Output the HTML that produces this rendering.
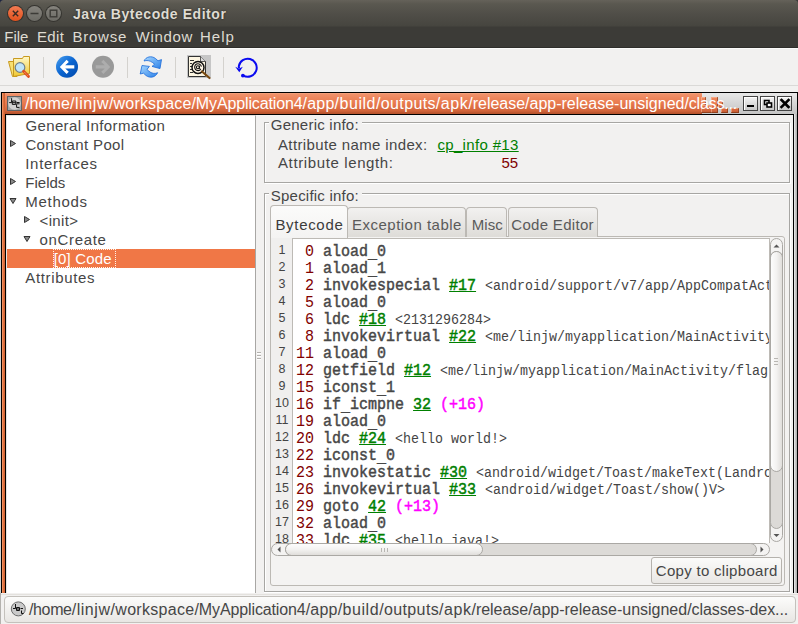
<!DOCTYPE html>
<html><head><meta charset="utf-8">
<style>
*{margin:0;padding:0;box-sizing:border-box}
html,body{width:798px;height:624px;overflow:hidden;background:#f2f1f0;font-family:"Liberation Sans",sans-serif;color:#3c3c3c}
.a{position:absolute}
.t{position:absolute;white-space:pre;line-height:1}
/* title + menu */
#tb{left:0;top:0;width:798px;height:49px;background:linear-gradient(#65625a 0,#5a5850 4px,#504e48 14px,#46453f 26px,#3c3b37 27px,#3c3b37 47px,#2f2e2b 47px,#2f2e2b 48px,#fbfbfa 48px,#fbfbfa 49px);border-radius:4px 4px 0 0}
#title{left:73px;top:7px;text-shadow:0 0 2px #1e1d1a;font-weight:bold;font-size:14px;color:#dfdbd2;letter-spacing:0.55px}
.menu{top:29px;font-size:15px;color:#dfdbd2}
.wb{position:absolute;top:5px;width:17px;height:17px;border-radius:50%;background:#34332f}
.wb i{position:absolute;left:1px;top:1px;width:15px;height:15px;border-radius:50%;display:block}
.wb svg{position:absolute;left:0;top:0}
/* toolbar */
.sep{position:absolute;top:57px;width:1px;height:21px;background:#d4d2ce}
#frame{left:1px;top:92px;width:797px;height:540px;background:#000}
#ftitle{left:2px;top:93px;width:795px;height:21px;background:linear-gradient(#e8e8e8,#c4c4c4)}
#forange{left:2px;top:93px;width:700px;height:21px;background:linear-gradient(#f7ae8a 0,#f0916a 1px,#e97a4e 10px,#d2643a 18px,#b9552e 20px)}
.ob{background:linear-gradient(#f7ae8a 0,#f0916a 1px,#e97a4e 10px,#d2643a 18px,#b9552e 20px);background-size:1px 21px;background-repeat:repeat-x;box-shadow:inset -1px -1px 0 rgba(110,45,15,0.55),inset 1px 1px 0 rgba(255,200,170,0.5)}
#fltxt{left:25px;top:96px;font-size:16px;color:#fff}
#lb{left:2px;top:93px;width:3px;height:500px;background:linear-gradient(90deg,#f5a070,#e07040,#c86030)}
#rb{left:794px;top:114px;width:3px;height:479px;background:linear-gradient(90deg,#f0f0f0,#c8c8c8,#a8a8a8)}
#tree{left:6px;top:115px;width:250px;height:478px;background:#fff;border-right:1px solid #a8a7a4;border-left:1px solid #e6e4e1;border-top:1px solid #e6e4e1}
#right{left:256px;top:115px;width:537px;height:478px;background:#f2f1f0}
.tr{position:absolute;font-size:15px;color:#464646;letter-spacing:0.9px;white-space:pre;line-height:19px;height:19px;padding-top:0}
.arr{position:absolute;width:0;height:0}
.etch{position:absolute;border:1px solid #a6a5a2;box-shadow:1px 1px 0 #fff, inset 1px 1px 0 #fff}

.gl{position:absolute;background:#a7a6a3}
.wl{position:absolute;background:#fff}
.lbl{position:absolute;white-space:pre;line-height:1;font-size:15px;color:#464646}
.tab{position:absolute;top:207px;height:30px;border:1px solid #bcb9b4;border-bottom:none;border-radius:4px 4px 0 0;background:linear-gradient(#f2f1f0,#dedcd8)}
.tabt{position:absolute;white-space:pre;line-height:1;font-size:15px;color:#5a5a5a}
.code{position:absolute;left:296px;white-space:pre;font-family:"Liberation Mono",monospace;font-size:16px;line-height:17px;height:17px;color:#474747;transform:scaleX(0.9375);transform-origin:0 0}
.code i.u{font-style:normal;position:relative;top:2px}
.code b{font-weight:normal;-webkit-text-stroke:0.45px #474747}
.o{color:#800000}
.r{color:#008000;-webkit-text-stroke:0.45px #008000;text-decoration:underline}
.m{color:#ff00ff;-webkit-text-stroke:0.45px #ff00ff}
.c{font-size:14.22px;color:#444}
.ln{position:absolute;left:271px;width:22px;text-align:center;font-size:12.5px;line-height:17px;color:#444}
#status{left:0;top:593px;width:798px;height:31px;background:#f2f1f0}
</style></head><body>
<div class="a" style="left:0;top:0;width:4px;height:4px;background:#1c2340"></div><div class="a" style="left:794px;top:0;width:4px;height:4px;background:#3a3a3a"></div><div id="tb" class="a"></div>
<div class="wb" style="left:7px"><i style="background:linear-gradient(#f37b52,#e2521e)"></i><svg width="17" height="17"><path d="M5.8 5.8L11.2 11.2M11.2 5.8L5.8 11.2" stroke="#3a2a22" stroke-width="1.4"/></svg></div>
<div class="wb" style="left:26px"><i style="background:linear-gradient(#85837d,#6c6b65)"></i><svg width="17" height="17"><path d="M4.5 8.5H12.5" stroke="#3c3b37" stroke-width="1.5"/></svg></div>
<div class="wb" style="left:45px"><i style="background:linear-gradient(#85837d,#6c6b65)"></i><svg width="17" height="17"><rect x="5.2" y="5.2" width="6.6" height="6.6" fill="none" stroke="#3c3b37" stroke-width="1.4"/></svg></div>
<div class="t" id="title">Java Bytecode Editor</div>
<div class="t menu" style="left:4.3px;letter-spacing:0px">File</div>
<div class="t menu" style="left:37px;letter-spacing:0.33px">Edit</div>
<div class="t menu" style="left:72.5px;letter-spacing:0.75px">Browse</div>
<div class="t menu" style="left:135.6px;letter-spacing:0.68px">Window</div>
<div class="t menu" style="left:200px;letter-spacing:1.0px">Help</div>

<svg class="a" style="left:0;top:48px" width="270" height="37" viewBox="0 48 270 37">
<defs>
<linearGradient id="gBlue" x1="0" y1="0" x2="1" y2="1"><stop offset="0" stop-color="#4aa0f0"/><stop offset="0.5" stop-color="#0a64d0"/><stop offset="1" stop-color="#0348a8"/></linearGradient>
<linearGradient id="gFold" x1="0" y1="0" x2="0" y2="1"><stop offset="0" stop-color="#fff8c8"/><stop offset="1" stop-color="#f0c830"/></linearGradient>
<linearGradient id="gRef" x1="0" y1="0" x2="1" y2="1"><stop offset="0" stop-color="#a8d8ff"/><stop offset="1" stop-color="#2a80e8"/></linearGradient>
</defs>
<!-- folder -->
<path d="M8.5 61.5 L13.5 61.5 L17 76.5 L12.5 76.5 Z" fill="#f8e070" stroke="#c89a20" stroke-width="1"/>
<path d="M13.5 58.5 L22.5 58.5 L23.5 56.5 L29.5 56.5 L29.5 73.5 L13.5 76.5 Z" fill="url(#gFold)" stroke="#c89a20" stroke-width="1"/>
<circle cx="20" cy="67.5" r="4.8" fill="#c0e4fa" stroke="#70808c" stroke-width="1.2"/>
<path d="M23.6 71.3 L28.4 76.3" stroke="#e05020" stroke-width="3" stroke-linecap="round"/>
<path d="M24.4 72.1 L27.6 75.5" stroke="#f8c080" stroke-width="1" stroke-dasharray="1 1"/>
<!-- back -->
<circle cx="67" cy="66.8" r="11" fill="url(#gBlue)"/>
<path d="M59.8 66.9 L66.6 59.8 L68.8 62 L65.2 65.2 L74.3 65.2 L74.3 68.6 L65.2 68.6 L68.8 71.8 L66.6 74 Z" fill="#fff"/>
<!-- forward -->
<circle cx="103" cy="66.8" r="11" fill="#999"/>
<path d="M110.2 66.9 L103.4 59.8 L101.2 62 L104.8 65.2 L95.7 65.2 L95.7 68.6 L104.8 68.6 L101.2 71.8 L103.4 74 Z" fill="#adadad"/>
<!-- refresh -->
<path d="M144 61 C146 56.5 151.5 55.5 155.5 58.5 L158 60.8 L161.5 59.6 L160 68.6 L152 66.4 L154.6 64.2 L152.5 62.5 C150 60.5 146.5 60 144 61 Z" fill="url(#gRef)" stroke="#1a6ad8" stroke-width="0.8"/>
<path d="M157.6 72.7 C155.5 77.5 150 78.5 146 75.5 L143.5 73.2 L140.2 74 L142 65.5 L149.4 66.4 L147 69.4 L149 71.3 C151.5 73.5 155 74 157.6 72.7 Z" fill="url(#gRef)" stroke="#1a6ad8" stroke-width="0.8"/>
<!-- doc -->
<rect x="187" y="55" width="24" height="23" fill="#c6c6c6"/>
<path d="M188.5 56.5 L200.5 56.5 L205.5 61.5 L205.5 76.5 L188.5 76.5 Z" fill="#fdf6e2" stroke="#333" stroke-width="1"/>
<path d="M200.5 56.5 L200.5 61.5 L205.5 61.5" fill="#ddd" stroke="#333" stroke-width="0.8"/>
<path d="M190 60.5 H194 M190 63.5 H192 M190 66.5 H192 M190 69.5 H192 M190 72.5 H193" stroke="#333" stroke-width="1"/>
<circle cx="198" cy="67.4" r="6" fill="#fff6e6" stroke="#111" stroke-width="1.5"/>
<path d="M200.8 69.2 A3.4 3.4 0 1 1 201.4 66.6" fill="none" stroke="#111" stroke-width="1.1"/>
<circle cx="197.9" cy="67.3" r="1.5" fill="none" stroke="#111" stroke-width="1.1"/>
<path d="M199.4 65.6 V68.4 Q199.6 69.4 200.8 69.2" fill="none" stroke="#111" stroke-width="1"/>
<path d="M202 71.5 L209.5 78" stroke="#7a4a10" stroke-width="2.2" stroke-linecap="round"/>
<!-- undo -->
<path d="M239 68 L238.8 66.4 A9 9 0 1 1 243.3 75.6" fill="none" stroke="#0a0af0" stroke-width="2"/>
<path d="M235.2 66.8 L239 68.6 L242.8 66.8 L239.3 72.2 Z" fill="#0a0af0"/>
<circle cx="242.9" cy="75.6" r="1.9" fill="#0a0af0"/>
</svg>
<div class="sep" style="left:43px"></div>
<div class="sep" style="left:127px"></div>
<div class="sep" style="left:175px"></div>
<div class="sep" style="left:223px"></div>
<div class="a" style="left:0;top:85px;width:798px;height:1px;background:#dad9d7"></div>

<div id="frame" class="a"></div>
<div id="ftitle" class="a"></div>
<div id="forange" class="a"></div>
<div class="a ob" style="left:701px;top:97px;width:5px;height:16px;background-position:0 -4px"></div>
<div class="a ob" style="left:701px;top:105px;width:17px;height:8px;background-position:0 -12px"></div>
<div class="a ob" style="left:711px;top:97px;width:7px;height:16px;background-position:0 -4px"></div>
<div class="a ob" style="left:718px;top:101px;width:5px;height:7px;background-position:0 -8px"></div>
<div class="a ob" style="left:721px;top:108px;width:7px;height:5px;background-position:0 -15px"></div>
<div class="a ob" style="left:731px;top:108px;width:8px;height:5px;background-position:0 -15px"></div>
<div class="t" id="fltxt"><span style="letter-spacing:0.11px">/home</span><span style="letter-spacing:0.57px">/linjw</span><span style="letter-spacing:0.16px">/workspace</span><span style="letter-spacing:-0.13px">/MyApplication4</span><span style="letter-spacing:0.21px">/app</span><span style="letter-spacing:0.54px">/build</span><span style="letter-spacing:0.36px">/outputs</span><span style="letter-spacing:0.56px">/apk</span><span style="letter-spacing:-0.03px">/release</span><span style="letter-spacing:0.01px">/app-release-unsigned</span><span style="letter-spacing:-0.19px">/class...</span></div>
<div id="lb" class="a"></div><div class="a" style="left:0;top:92px;width:1px;height:501px;background:#d6d4d0"></div>
<div id="rb" class="a"></div>
<div id="tree" class="a"></div>
<div id="right" class="a"></div>

<div class="tr" style="left:25.4px;top:116px;letter-spacing:0.38px">General Information</div>
<div class="tr" style="left:25.4px;top:135px;letter-spacing:0.38px">Constant Pool</div>
<div class="tr" style="left:25.3px;top:154px;letter-spacing:0.66px">Interfaces</div>
<div class="tr" style="left:25.3px;top:173px;letter-spacing:0.0px">Fields</div>
<div class="tr" style="left:25.3px;top:192px;letter-spacing:0.7px">Methods</div>
<div class="tr" style="left:39.6px;top:211px;letter-spacing:0.32px">&lt;init&gt;</div>
<div class="tr" style="left:39.6px;top:230px;letter-spacing:0.66px">onCreate</div>
<div class="a" style="left:7px;top:249px;width:248px;height:19px;background:#f07746"></div>
<div class="tr" style="left:53.8px;top:249px;color:#fff;letter-spacing:0.14px">[0] Code</div>
<div class="tr" style="left:25.3px;top:268px;letter-spacing:0.64px">Attributes</div>


<div class="a" style="left:257px;top:352px;width:4px;height:1px;background:#b4b2ae;box-shadow:0 1px 0 #fff,0 3px 0 #b4b2ae,0 4px 0 #fff,0 6px 0 #b4b2ae,0 7px 0 #fff"></div>
<!-- generic info -->
<div class="wl" style="left:265px;top:123px;width:526px;height:61px"></div>
<div class="a" style="left:266px;top:124px;width:523px;height:58px;background:#f2f1f0"></div>
<div class="gl" style="left:264px;top:122px;width:526px;height:61px"></div>
<div class="a" style="left:265px;top:123px;width:524px;height:59px;background:#f2f1f0;border-left:1px solid #fff;border-top:1px solid #fff"></div>
<div class="a" style="left:269px;top:116px;width:93px;height:14px;background:#f2f1f0"></div>
<div class="lbl" style="left:270.8px;top:117px;letter-spacing:0.23px">Generic info:</div>
<div class="lbl" style="left:278px;top:137px;letter-spacing:0.37px">Attribute name index:</div>
<div class="lbl" style="left:278px;top:155px;letter-spacing:0.62px">Attribute length:</div>
<div class="lbl" style="left:437.4px;top:137px;color:#008000;text-decoration:underline;letter-spacing:0.34px">cp_info #13</div>
<div class="lbl" style="left:501.5px;top:155px;color:#800000;letter-spacing:0px">55</div>
<!-- specific info -->
<div class="gl" style="left:264px;top:193px;width:526px;height:399px"></div>
<div class="a" style="left:265px;top:194px;width:524px;height:397px;background:#f2f1f0;border-left:1px solid #fff;border-top:1px solid #fff"></div>
<div class="wl" style="left:264px;top:592px;width:527px;height:1px"></div>
<div class="wl" style="left:790px;top:193px;width:1px;height:400px"></div>
<div class="a" style="left:269px;top:187px;width:93px;height:14px;background:#f2f1f0"></div>
<div class="lbl" style="left:270.8px;top:188px;letter-spacing:0.22px">Specific info:</div>
<!-- tab pane -->
<div class="a" style="left:270px;top:236px;width:515px;height:350px;border:1px solid #bcb9b4;border-radius:0 3px 3px 3px;background:#f4f3f2"></div>
<div class="tab" style="left:347px;width:119px"></div>
<div class="tab" style="left:466px;width:41px"></div>
<div class="tab" style="left:508px;width:90px"></div>
<div class="a" style="left:270px;top:205px;width:78px;height:33px;border:1px solid #bcb9b4;border-bottom:none;border-radius:4px 4px 0 0;background:linear-gradient(#fbfbfa,#f4f3f2)"></div>
<div class="tabt" style="left:275.4px;top:217px;color:#3c3c3c;letter-spacing:0.69px">Bytecode</div>
<div class="tabt" style="left:352px;top:217px;letter-spacing:0.49px">Exception table</div>
<div class="tabt" style="left:471.7px;top:217px;letter-spacing:0.1px">Misc</div>
<div class="tabt" style="left:511.3px;top:217px;letter-spacing:0.31px">Code Editor</div>
<!-- gutter + editor -->
<div class="a" style="left:271px;top:238px;width:21px;height:305px;background:#f0efee"></div>
<div class="a" style="left:292px;top:238px;width:478px;height:305px;background:#fff;border-left:1px solid #bdbab5;border-top:1px solid #bdbab5;border-right:1px solid #bdbab5;overflow:hidden" id="ed">
<div class="code" style="top:5px;left:3px"><span class="o"> 0</span> <b>aload<i class="u">_</i>0</b></div>
<div class="code" style="top:22px;left:3px"><span class="o"> 1</span> <b>aload<i class="u">_</i>1</b></div>
<div class="code" style="top:39px;left:3px"><span class="o"> 2</span> <b>invokespecial</b> <span class="r">#17</span> <span class="c">&lt;android/support/v7/app/AppCompatActivity/onCreate(Landroid/os/Bundle;)V&gt;</span></div>
<div class="code" style="top:56px;left:3px"><span class="o"> 5</span> <b>aload<i class="u">_</i>0</b></div>
<div class="code" style="top:73px;left:3px"><span class="o"> 6</span> <b>ldc</b> <span class="r">#18</span> <span class="c">&lt;2131296284&gt;</span></div>
<div class="code" style="top:90px;left:3px"><span class="o"> 8</span> <b>invokevirtual</b> <span class="r">#22</span> <span class="c">&lt;me/linjw/myapplication/MainActivity/setContentView(I)V&gt;</span></div>
<div class="code" style="top:107px;left:3px"><span class="o">11</span> <b>aload<i class="u">_</i>0</b></div>
<div class="code" style="top:124px;left:3px"><span class="o">12</span> <b>getfield</b> <span class="r">#12</span> <span class="c">&lt;me/linjw/myapplication/MainActivity/flag : I&gt;</span></div>
<div class="code" style="top:141px;left:3px"><span class="o">15</span> <b>iconst<i class="u">_</i>1</b></div>
<div class="code" style="top:158px;left:3px"><span class="o">16</span> <b>if<i class="u">_</i>icmpne</b> <span class="r">32</span> <span class="m">(+16)</span></div>
<div class="code" style="top:175px;left:3px"><span class="o">19</span> <b>aload<i class="u">_</i>0</b></div>
<div class="code" style="top:192px;left:3px"><span class="o">20</span> <b>ldc</b> <span class="r">#24</span> <span class="c">&lt;hello world!&gt;</span></div>
<div class="code" style="top:209px;left:3px"><span class="o">22</span> <b>iconst<i class="u">_</i>0</b></div>
<div class="code" style="top:226px;left:3px"><span class="o">23</span> <b>invokestatic</b> <span class="r">#30</span> <span class="c">&lt;android/widget/Toast/makeText(Landroid/content/Context;Ljava/lang/CharSequence;I)Landroid/widget/Toast;&gt;</span></div>
<div class="code" style="top:243px;left:3px"><span class="o">26</span> <b>invokevirtual</b> <span class="r">#33</span> <span class="c">&lt;android/widget/Toast/show()V&gt;</span></div>
<div class="code" style="top:260px;left:3px"><span class="o">29</span> <b>goto</b> <span class="r">42</span> <span class="m">(+13)</span></div>
<div class="code" style="top:277px;left:3px"><span class="o">32</span> <b>aload<i class="u">_</i>0</b></div>
<div class="code" style="top:294px;left:3px"><span class="o">33</span> <b>ldc</b> <span class="r">#35</span> <span class="c">&lt;hello java!&gt;</span></div>
</div>
<div class="ln" style="top:242px">1</div>
<div class="ln" style="top:259px">2</div>
<div class="ln" style="top:276px">3</div>
<div class="ln" style="top:293px">4</div>
<div class="ln" style="top:310px">5</div>
<div class="ln" style="top:327px">6</div>
<div class="ln" style="top:344px">7</div>
<div class="ln" style="top:361px">8</div>
<div class="ln" style="top:378px">9</div>
<div class="ln" style="top:395px">10</div>
<div class="ln" style="top:412px">11</div>
<div class="ln" style="top:429px">12</div>
<div class="ln" style="top:446px">13</div>
<div class="ln" style="top:463px">14</div>
<div class="ln" style="top:480px">15</div>
<div class="ln" style="top:497px">16</div>
<div class="ln" style="top:514px">17</div>
<div class="ln" style="top:531px">18</div>
<div class="a" style="left:271px;top:543px;width:21px;height:0px;background:#f0efee"></div>
<!-- vscroll -->
<div class="a" style="left:770px;top:238px;width:14px;height:305px;background:#f4f3f2"></div>
<div class="a" style="left:770px;top:238px;width:13px;height:304px;border:1px solid #aaa8a4;border-radius:7px;background:#f4f3f2"></div>
<div class="a" style="left:770px;top:251px;width:13px;height:278px;border:1px solid #aaa8a4;border-radius:7px;background:#dcdad7"></div>
<div class="a" style="left:770px;top:251px;width:13px;height:221px;border:1px solid #aaa8a4;border-radius:7px;background:linear-gradient(90deg,#fdfdfd,#f3f2f1 50%,#e0dedb)"></div>
<div class="a" style="left:774px;top:358px;width:4px;height:1px;background:#b8b6b2;box-shadow:0 3px 0 #b8b6b2,0 6px 0 #b8b6b2"></div>
<svg class="a" style="left:770px;top:238px" width="14" height="305"><path d="M3.5 9.5 L9.5 9.5 L6.5 6.5 Z" fill="#555"/><path d="M3.5 296 L9.5 296 L6.5 299 Z" fill="#555"/></svg>
<!-- hscroll -->
<div class="a" style="left:271px;top:543px;width:499px;height:13px;border:1px solid #aaa8a4;border-radius:7px;background:#f4f3f2"></div>
<div class="a" style="left:285px;top:543px;width:472px;height:13px;border:1px solid #aaa8a4;border-radius:7px;background:#dcdad7"></div>
<div class="a" style="left:285px;top:543px;width:198px;height:13px;border:1px solid #aaa8a4;border-radius:7px;background:linear-gradient(#fdfdfd,#f3f2f1 50%,#e0dedb)"></div>
<div class="a" style="left:381px;top:548px;width:1px;height:4px;background:#b8b6b2;box-shadow:3px 0 0 #b8b6b2,6px 0 0 #b8b6b2"></div>
<svg class="a" style="left:271px;top:543px" width="499" height="13"><path d="M9.5 3.5 L9.5 9.5 L6.5 6.5 Z" fill="#555"/><path d="M489.5 3.5 L489.5 9.5 L492.5 6.5 Z" fill="#555"/></svg>
<!-- copy button -->
<div class="a" style="left:651px;top:557px;width:131px;height:27px;border:1px solid #b5b2ad;border-radius:3px;background:linear-gradient(#fbfbfa,#e9e7e4)"></div>
<div class="lbl" style="left:655.8px;top:563px;letter-spacing:0.3px">Copy to clipboard</div>
<div id="status" class="a"></div>

<!-- tree arrows -->
<svg class="a" style="left:6px;top:115px" width="40" height="140">
<path d="M4.5 25.5 L4.5 31.5 L9.5 28.5 Z" fill="#8a8a8a" stroke="#333" stroke-width="1" stroke-linejoin="round"/>
<path d="M4.5 63.5 L4.5 69.5 L9.5 66.5 Z" fill="#8a8a8a" stroke="#333" stroke-width="1" stroke-linejoin="round"/>
<path d="M4 83.5 L10 83.5 L7 88.5 Z" fill="#8a8a8a" stroke="#333" stroke-width="1" stroke-linejoin="round"/>
<path d="M18.5 101.5 L18.5 107.5 L23.5 104.5 Z" fill="#8a8a8a" stroke="#333" stroke-width="1" stroke-linejoin="round"/>
<path d="M18 121.5 L24 121.5 L21 126.5 Z" fill="#8a8a8a" stroke="#333" stroke-width="1" stroke-linejoin="round"/>
</svg>
<div class="a" style="left:53px;top:249px;width:63px;height:19px;border:1px dotted #fff3e8"></div>
<!-- JBE icon -->
<svg class="a" style="left:7px;top:96px" width="15" height="15" viewBox="0 0 15 15">
<rect x="0" y="0" width="15" height="15" fill="#5e6264"/>
<rect x="1" y="1" width="13" height="13" fill="#a4a6a6"/>
<circle cx="7.5" cy="7.5" r="6.2" fill="#d2d2d2"/>
<path d="M4.6 2.2 V6.6 H2.2 M5.3 5 H8.8 V8.4 H5.3 Z M5.3 6.7 H8.8 M9.5 6.5 H12.6 M9.5 7.8 H12.6 M9.6 8.2 V11.4 H12.4" fill="none" stroke="#111" stroke-width="1"/>
</svg>
<!-- frame buttons -->
<div class="a" style="left:743px;top:96px;width:15px;height:15px;border:1px solid #444;background:linear-gradient(#f4f4f4,#c8c8c8);box-shadow:inset 1px 1px 0 #fff"></div>
<div class="a" style="left:760px;top:96px;width:15px;height:15px;border:1px solid #444;background:linear-gradient(#f4f4f4,#c8c8c8);box-shadow:inset 1px 1px 0 #fff"></div>
<div class="a" style="left:777px;top:96px;width:15px;height:15px;border:1px solid #444;background:linear-gradient(#f4f4f4,#c8c8c8);box-shadow:inset 1px 1px 0 #fff"></div>
<svg class="a" style="left:743px;top:96px" width="50" height="15">
<rect x="4" y="9" width="7" height="2" fill="#000"/>
<rect x="21.5" y="4.5" width="4.5" height="4" fill="#fff" stroke="#000" stroke-width="1.6"/>
<rect x="24" y="7" width="4.5" height="4" fill="#fff" stroke="#000" stroke-width="1.6"/>
<path d="M38.5 4 L45.5 11 M45.5 4 L38.5 11" stroke="#000" stroke-width="2.6" stroke-linecap="square"/>
</svg>
<!-- status -->
<div class="a" style="left:0;top:593px;width:1px;height:31px;background:#b4b2ae"></div>
<div class="a" style="left:1px;top:594px;width:797px;height:1px;background:#e4e2de"></div>
<div class="a" style="left:4px;top:596px;width:792px;height:27px;border:1px solid #c4c1bc;border-radius:4px;background:linear-gradient(#fcfcfb,#e8e6e3)"></div>
<svg class="a" style="left:10px;top:601px" width="16" height="16" viewBox="0 0 16 16">
<circle cx="8.3" cy="7.9" r="7" fill="#c9c9c9" stroke="#6a6a6a" stroke-width="1"/>
<path d="M5.5 3 V7.5 H3 M6.5 6.5 H9.5 V9.5 H6.5 Z M6.5 8 H9.5 M10.5 7.5 H13 M11.5 9.5 V12.5 H13.5" fill="none" stroke="#111" stroke-width="1"/>
</svg>
<div class="lbl" id="sttxt" style="left:29px;top:602px;font-size:16px"><span style="letter-spacing:-0.37px">/home</span><span style="letter-spacing:0.56px">/linjw</span><span style="letter-spacing:0.30px">/workspace</span><span style="letter-spacing:-0.12px">/MyApplication4</span><span style="letter-spacing:0.21px">/app</span><span style="letter-spacing:0.54px">/build</span><span style="letter-spacing:0.38px">/outputs</span><span style="letter-spacing:0.56px">/apk</span><span style="letter-spacing:-0.05px">/release</span><span style="letter-spacing:-0.01px">/app-release-unsigned</span><span style="letter-spacing:-0.08px">/classes-dex...</span></div>
</body></html>
